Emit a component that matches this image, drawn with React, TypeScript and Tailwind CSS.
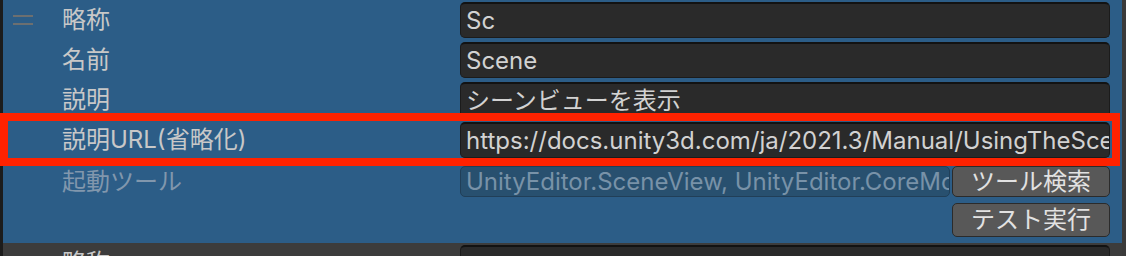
import React from 'react';

const font = { fontFamily: 'Inter, "Noto Sans CJK JP", sans-serif' };

function Field({ value }: { value: string }) {
    return (
        <div className="flex-1 min-w-0 h-[36px] rounded-[5px] bg-[#2a2a2a] border border-[#1b1b1b] border-t-[2px] border-t-[#121212] flex items-center pl-[5px] overflow-hidden">
            <span className="whitespace-nowrap text-[24px] text-[#d2d2d2] leading-none">{value}</span>
        </div>
    );
}

function Row({ label, value, handle }: { label: string; value: string; handle?: boolean }) {
    return (
        <div className="flex items-center h-[40px] min-w-0">
            <div className="w-[59px] shrink-0 pl-[10px] flex flex-col gap-[6px]">
                {handle && (
                    <>
                        <div className="w-[20px] h-[2px] bg-[#6c6f70]" />
                        <div className="w-[20px] h-[2px] bg-[#6c6f70]" />
                    </>
                )}
            </div>
            <div className="w-[398px] shrink-0 text-[24px] text-[#c8c8c8] leading-none whitespace-nowrap">{label}</div>
            <Field value={value} />
            <div className="w-[12px] shrink-0" />
        </div>
    );
}

export default function App() {
    const rows = [
        { label: '略称', value: 'Sc' },
        { label: '名前', value: 'Scene' },
        { label: '説明', value: 'シーンビューを表示' },
        { label: '説明URL(省略化)', value: 'https://docs.unity3d.com/ja/2021.3/Manual/UsingTheSceneView.html' },
    ];

    return (
        <div className="relative w-[1126px] h-[256px] overflow-hidden flex bg-[#383838]" style={font}>
            <div className="w-[3px] shrink-0 bg-[#1c1c1c]" />
            <div className="flex-1 min-w-0 flex flex-col">
                <div className="h-[243px] shrink-0 bg-[#2c5d87] flex flex-col">
                    {rows.map((r, i) => (
                        <Row key={r.label} label={r.label} value={r.value} handle={i === 0} />
                    ))}

                    <div className="flex pt-[6px] min-w-0">
                        <div className="w-[59px] shrink-0" />
                        <div className="w-[398px] shrink-0 h-[31px] flex items-center text-[24px] text-[#8197ad] leading-none whitespace-nowrap">起動ツール</div>
                        <div className="flex-1 min-w-0 h-[31px] rounded-[5px] bg-[#28506f] border border-[#213f58] flex items-center pl-[5px] overflow-hidden">
                            <span className="whitespace-nowrap text-[24px] text-[#7892a8] leading-none">UnityEditor.SceneView, UnityEditor.CoreModule</span>
                        </div>
                        <div className="w-[160px] shrink-0 flex flex-col gap-[6px] pl-[2px]">
                            <button className="h-[31px] rounded-[5px] bg-[#585858] border border-[#2b2b2b] text-[24px] text-[#e2e2e2] leading-none">ツール検索</button>
                            <button className="h-[34px] rounded-[5px] bg-[#585858] border border-[#2b2b2b] text-[24px] text-[#e2e2e2] leading-none">テスト実行</button>
                        </div>
                        <div className="w-[12px] shrink-0" />
                    </div>
                </div>
                <div className="flex-1 bg-[#3c3c3c] flex flex-col">
                    <Row label="略称" value="" />
                </div>
            </div>
            <div className="w-[4px] shrink-0 bg-[#3a3a3a]" />

            <div className="absolute left-0 top-[113px] w-[1120px] h-[53px] border-[8px] border-[#ff2200]" />
        </div>
    );
}
